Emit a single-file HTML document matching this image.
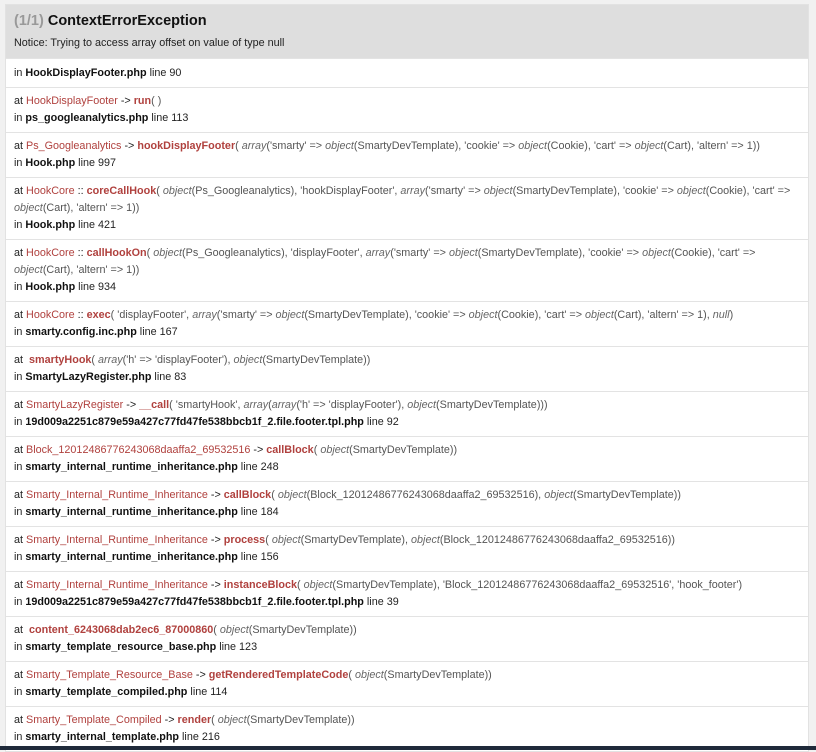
<!DOCTYPE html>
<html><head><meta charset="utf-8"><style>
html,body{margin:0;padding:0;}
body{width:816px;height:750px;overflow:hidden;background:#f1f1f1;font-family:"Liberation Sans",Arial,sans-serif;font-size:10.8px;color:#222;position:relative;}
.wrap{position:absolute;left:5px;top:4px;width:802px;background:#fff;border:1px solid #e2e2e2;}
.head{background:#dedede;padding:7px 8px 4px 8px;height:42px;}
.head h1{margin:0;font-size:14.5px;font-weight:bold;color:#111;line-height:19px;}
.head h1 span{color:#999;}
.head p{margin:4px 0 0;font-size:10.8px;line-height:16px;color:#222;}
.row{border-top:1px solid #e3e3e3;padding:5px 8px;line-height:17px;color:#222;white-space:nowrap;}
.c{color:#b0413e;}
.f{color:#b0413e;font-weight:bold;}
.a{color:#555;}
.a i{color:#666;}
b{font-weight:bold;color:#111;}
.bar{position:absolute;left:0;bottom:0;width:816px;height:4px;background:#1f2a3a;}
</style></head><body>
<div class="wrap">
<div class="head"><h1><span>(1/1)</span> ContextErrorException</h1><p>Notice: Trying to access array offset on value of type null</p></div>
<div class="row" style="padding:6px 8px 5px">in <b>HookDisplayFooter.php</b> line 90</div>
<div class="row">at <span class="c">HookDisplayFooter</span> -&gt; <span class="f">run</span><span class="a">( )</span><br>in <b>ps_googleanalytics.php</b> line 113</div>
<div class="row">at <span class="c">Ps_Googleanalytics</span> -&gt; <span class="f">hookDisplayFooter</span><span class="a">( <i>array</i>('smarty' =&gt; <i>object</i>(SmartyDevTemplate), 'cookie' =&gt; <i>object</i>(Cookie), 'cart' =&gt; <i>object</i>(Cart), 'altern' =&gt; 1))</span><br>in <b>Hook.php</b> line 997</div>
<div class="row">at <span class="c">HookCore</span> :: <span class="f">coreCallHook</span><span class="a">( <i>object</i>(Ps_Googleanalytics), 'hookDisplayFooter', <i>array</i>('smarty' =&gt; <i>object</i>(SmartyDevTemplate), 'cookie' =&gt; <i>object</i>(Cookie), 'cart' =&gt;<br><i>object</i>(Cart), 'altern' =&gt; 1))</span><br>in <b>Hook.php</b> line 421</div>
<div class="row">at <span class="c">HookCore</span> :: <span class="f">callHookOn</span><span class="a">( <i>object</i>(Ps_Googleanalytics), 'displayFooter', <i>array</i>('smarty' =&gt; <i>object</i>(SmartyDevTemplate), 'cookie' =&gt; <i>object</i>(Cookie), 'cart' =&gt;<br><i>object</i>(Cart), 'altern' =&gt; 1))</span><br>in <b>Hook.php</b> line 934</div>
<div class="row">at <span class="c">HookCore</span> :: <span class="f">exec</span><span class="a">( 'displayFooter', <i>array</i>('smarty' =&gt; <i>object</i>(SmartyDevTemplate), 'cookie' =&gt; <i>object</i>(Cookie), 'cart' =&gt; <i>object</i>(Cart), 'altern' =&gt; 1), <i>null</i>)</span><br>in <b>smarty.config.inc.php</b> line 167</div>
<div class="row">at &nbsp;<span class="f">smartyHook</span><span class="a">( <i>array</i>('h' =&gt; 'displayFooter'), <i>object</i>(SmartyDevTemplate))</span><br>in <b>SmartyLazyRegister.php</b> line 83</div>
<div class="row">at <span class="c">SmartyLazyRegister</span> -&gt; <span class="f">__call</span><span class="a">( 'smartyHook', <i>array</i>(<i>array</i>('h' =&gt; 'displayFooter'), <i>object</i>(SmartyDevTemplate)))</span><br>in <b>19d009a2251c879e59a427c77fd47fe538bbcb1f_2.file.footer.tpl.php</b> line 92</div>
<div class="row">at <span class="c">Block_12012486776243068daaffa2_69532516</span> -&gt; <span class="f">callBlock</span><span class="a">( <i>object</i>(SmartyDevTemplate))</span><br>in <b>smarty_internal_runtime_inheritance.php</b> line 248</div>
<div class="row">at <span class="c">Smarty_Internal_Runtime_Inheritance</span> -&gt; <span class="f">callBlock</span><span class="a">( <i>object</i>(Block_12012486776243068daaffa2_69532516), <i>object</i>(SmartyDevTemplate))</span><br>in <b>smarty_internal_runtime_inheritance.php</b> line 184</div>
<div class="row">at <span class="c">Smarty_Internal_Runtime_Inheritance</span> -&gt; <span class="f">process</span><span class="a">( <i>object</i>(SmartyDevTemplate), <i>object</i>(Block_12012486776243068daaffa2_69532516))</span><br>in <b>smarty_internal_runtime_inheritance.php</b> line 156</div>
<div class="row">at <span class="c">Smarty_Internal_Runtime_Inheritance</span> -&gt; <span class="f">instanceBlock</span><span class="a">( <i>object</i>(SmartyDevTemplate), 'Block_12012486776243068daaffa2_69532516', 'hook_footer')</span><br>in <b>19d009a2251c879e59a427c77fd47fe538bbcb1f_2.file.footer.tpl.php</b> line 39</div>
<div class="row">at &nbsp;<span class="f">content_6243068dab2ec6_87000860</span><span class="a">( <i>object</i>(SmartyDevTemplate))</span><br>in <b>smarty_template_resource_base.php</b> line 123</div>
<div class="row">at <span class="c">Smarty_Template_Resource_Base</span> -&gt; <span class="f">getRenderedTemplateCode</span><span class="a">( <i>object</i>(SmartyDevTemplate))</span><br>in <b>smarty_template_compiled.php</b> line 114</div>
<div class="row">at <span class="c">Smarty_Template_Compiled</span> -&gt; <span class="f">render</span><span class="a">( <i>object</i>(SmartyDevTemplate))</span><br>in <b>smarty_internal_template.php</b> line 216</div>
</div>
<div class="bar"></div>
</body></html>
